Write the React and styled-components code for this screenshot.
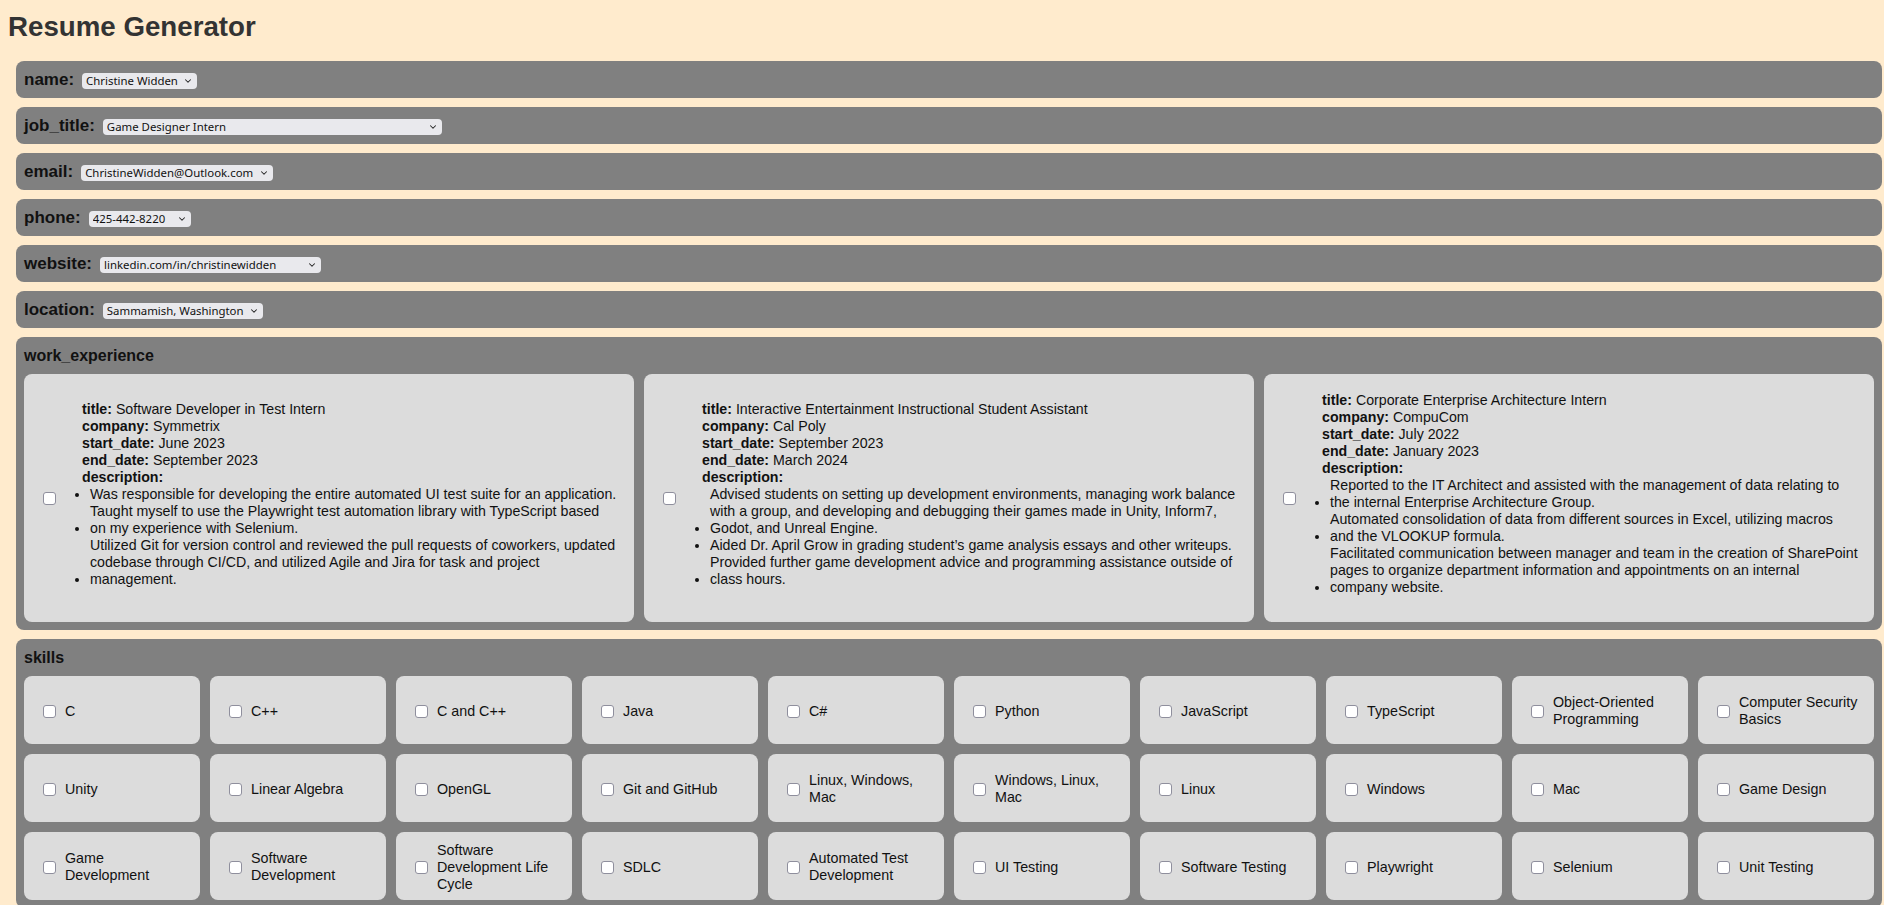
import React from 'react';
import styled, { createGlobalStyle } from 'styled-components';
import { ChevronDown } from 'lucide-react';

const NARROW = `"Liberation Sans Narrow", "Arial Narrow", "Liberation Sans", Arial, sans-serif`;

const GlobalStyle = createGlobalStyle`
    html, body {
        margin:0;
        padding:0;
        background:#ffebcd;
    }
    body {
        font-family:"Liberation Sans", Arial, sans-serif;
        color:#111;
    }
`;

const Page = styled.div`
    padding:11px 2px 12px 16px;
`;

const Title = styled.h1`
    margin:0 0 19px -8px;
    font-size:27.7px;
    line-height:31px;
    font-weight:bold;
    color:#333;
`;

const Sections = styled.div`
    display:flex;
    flex-direction:column;
    gap:9px;
`;

const FieldRow = styled.div`
    height:37px;
    box-sizing:border-box;
    padding:0 8px;
    display:flex;
    align-items:center;
    gap:8px;
    background:#808080;
    border-radius:8px;
`;

const FieldLabel = styled.label`
    font-size:17px;
    font-weight:bold;
    color:#111;
`;

const PickerWrap = styled.span`
    position:relative;
    display:inline-flex;
    width:${p => p.$w}px;
    margin-top:2px;
`;

const Picker = styled.select`
    appearance:none;
    width:100%;
    height:16px;
    box-sizing:border-box;
    border:0;
    border-radius:4px;
    background:#e9e9ed;
    font-family:"Noto Sans", "DejaVu Sans", sans-serif;
    font-size:11.4px;
    line-height:16px;
    color:#111;
    padding:0 12px 0 4px;
    outline:none;
`;

const Chevron = styled(ChevronDown)`
    position:absolute;
    right:4px;
    top:50%;
    transform:translateY(-50%);
    pointer-events:none;
    color:#222;
`;

const Section = styled.section`
    background:#808080;
    border-radius:8px;
    padding:9px 8px 8px;
    display:flex;
    flex-direction:column;
    gap:9px;
`;

const SectionTitle = styled.h2`
    margin:0;
    font-family:${NARROW};
    font-size:16px;
    line-height:19px;
    font-weight:bold;
    color:#111;
`;

const CardGrid = styled.div`
    display:grid;
    grid-template-columns:repeat(3, 1fr);
    gap:10px;
`;

const Card = styled.div`
    background:#dcdcdc;
    border-radius:8px;
    padding:18px 12px 18px 15px;
    display:flex;
    align-items:center;
    font-family:${NARROW};
    font-size:14.2px;
    line-height:17px;
    color:#111;
    overflow:hidden;
`;

const Check = styled.input.attrs({ type: 'checkbox' })`
    appearance:none;
    flex:none;
    width:13px;
    height:13px;
    box-sizing:border-box;
    margin:3px 3px 3px 4px;
    border:1px solid #8f8f9d;
    border-radius:3px;
    background:#fff;
`;

const CardBody = styled.div`
    margin-left:23px;
    min-width:0;
`;

const Detail = styled.div`
    b { font-weight:bold; }
`;

const Duties = styled.ul`
    margin:0 0 8px;
    padding-left:8px;
`;

const Duty = styled.li`
    span {
        display:inline-block;
        white-space:nowrap;
    }
`;

const SkillGrid = styled.div`
    display:grid;
    grid-template-columns:repeat(10, 1fr);
    grid-auto-rows:68px;
    gap:10px;
`;

const Skill = styled.label`
    background:#dcdcdc;
    border-radius:8px;
    padding:2px 15px 0;
    display:flex;
    align-items:center;
    gap:6px;
    font-family:${NARROW};
    font-size:14.3px;
    line-height:17px;
    color:#111;
`;

const fields = [
    { key: 'name', value: 'Christine Widden', w: 115 },
    { key: 'job_title', value: 'Game Designer Intern', w: 339 },
    { key: 'email', value: 'ChristineWidden@Outlook.com', w: 192 },
    { key: 'phone', value: '425-442-8220', w: 102 },
    { key: 'website', value: 'linkedin.com/in/christinewidden', w: 221 },
    { key: 'location', value: 'Sammamish, Washington', w: 160 },
];

// each duty is kept as the lines it wraps into in the original layout
const jobs = [
    {
        title: 'Software Developer in Test Intern',
        company: 'Symmetrix',
        start: 'June 2023',
        end: 'September 2023',
        duties: [
            ['Was responsible for developing the entire automated UI test suite for an application.'],
            ['Taught myself to use the Playwright test automation library with TypeScript based', 'on my experience with Selenium.'],
            ['Utilized Git for version control and reviewed the pull requests of coworkers, updated', 'codebase through CI/CD, and utilized Agile and Jira for task and project', 'management.'],
        ],
    },
    {
        title: 'Interactive Entertainment Instructional Student Assistant',
        company: 'Cal Poly',
        start: 'September 2023',
        end: 'March 2024',
        duties: [
            ['Advised students on setting up development environments, managing work balance', 'with a group, and developing and debugging their games made in Unity, Inform7,', 'Godot, and Unreal Engine.'],
            ['Aided Dr. April Grow in grading student\u2019s game analysis essays and other writeups.'],
            ['Provided further game development advice and programming assistance outside of', 'class hours.'],
        ],
    },
    {
        title: 'Corporate Enterprise Architecture Intern',
        company: 'CompuCom',
        start: 'July 2022',
        end: 'January 2023',
        duties: [
            ['Reported to the IT Architect and assisted with the management of data relating to', 'the internal Enterprise Architecture Group.'],
            ['Automated consolidation of data from different sources in Excel, utilizing macros', 'and the VLOOKUP formula.'],
            ['Facilitated communication between manager and team in the creation of SharePoint', 'pages to organize department information and appointments on an internal', 'company website.'],
        ],
    },
];

const skills = [
    'C', 'C++', 'C and C++', 'Java', 'C#', 'Python', 'JavaScript', 'TypeScript', 'Object-Oriented Programming', 'Computer Security Basics',
    'Unity', 'Linear Algebra', 'OpenGL', 'Git and GitHub', 'Linux, Windows, Mac', 'Windows, Linux, Mac', 'Linux', 'Windows', 'Mac', 'Game Design',
    'Game Development', 'Software Development', 'Software Development Life Cycle', 'SDLC', 'Automated Test Development', 'UI Testing', 'Software Testing', 'Playwright', 'Selenium', 'Unit Testing',
];

function App(){
    return(
        <Page>
            <GlobalStyle/>
            <Title>Resume Generator</Title>
            <Sections>
                {fields.map(f => (
                    <FieldRow key={f.key}>
                        <FieldLabel>{f.key}:</FieldLabel>
                        <PickerWrap $w={f.w}>
                            <Picker defaultValue={f.value}>
                                <option>{f.value}</option>
                            </Picker>
                            <Chevron size={10} strokeWidth={2.5}/>
                        </PickerWrap>
                    </FieldRow>
                ))}
                <Section>
                    <SectionTitle>work_experience</SectionTitle>
                    <CardGrid>
                        {jobs.map(job => (
                            <Card key={job.title}>
                                <Check/>
                                <CardBody>
                                    <Detail><b>title:</b> {job.title}</Detail>
                                    <Detail><b>company:</b> {job.company}</Detail>
                                    <Detail><b>start_date:</b> {job.start}</Detail>
                                    <Detail><b>end_date:</b> {job.end}</Detail>
                                    <Detail><b>description:</b></Detail>
                                    <Duties>
                                        {job.duties.map(lines => (
                                            <Duty key={lines[0]}>
                                                <span>
                                                    {lines.map((l, i) => (
                                                        <React.Fragment key={i}>{i > 0 && <br/>}{l}</React.Fragment>
                                                    ))}
                                                </span>
                                            </Duty>
                                        ))}
                                    </Duties>
                                </CardBody>
                            </Card>
                        ))}
                    </CardGrid>
                </Section>
                <Section>
                    <SectionTitle>skills</SectionTitle>
                    <SkillGrid>
                        {skills.map(s => (
                            <Skill key={s}>
                                <Check/>
                                <span>{s}</span>
                            </Skill>
                        ))}
                    </SkillGrid>
                </Section>
            </Sections>
        </Page>
    );
}

export default App
